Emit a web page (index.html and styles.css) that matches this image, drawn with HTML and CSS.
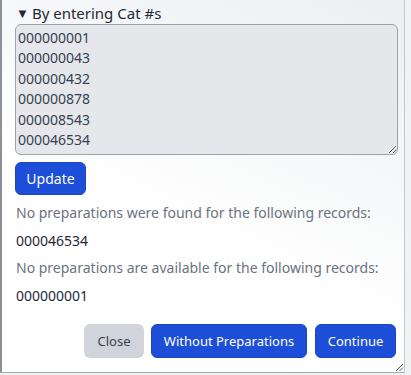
FILE: index.html
```html
<!DOCTYPE html>
<html>
<head>
<meta charset="utf-8">
<link rel="stylesheet" href="styles.css">
</head>
<body>
<div class="dialog">
  <details open class="entry">
    <summary class="summary">By entering Cat #s</summary>
    <textarea class="cats" rows="6">000000001
000000043
000000432
000000878
000008543
000046534</textarea>
  </details>
  <button class="btn btn-primary update">Update</button>
  <p class="note">No preparations were found for the following records:</p>
  <p class="rec">000046534</p>
  <p class="note">No preparations are available for the following records:</p>
  <p class="rec">000000001</p>
  <div class="actions">
    <button class="btn btn-gray">Close</button>
    <button class="btn btn-primary">Without Preparations</button>
    <button class="btn btn-primary">Continue</button>
  </div>
  <svg class="grip" width="10" height="10" viewBox="0 0 10 10"><path d="M9 2 L2 9 M9 5.5 L5.5 9" stroke="#555" stroke-width="1" fill="none"/></svg>
</div>
</body>
</html>
```

FILE: styles.css
```css
html, body {
  margin: 0;
  padding: 0;
}
body {
  width: 411px;
  height: 375px;
  overflow: hidden;
  background: #f1f2f4;
  font-family: "Noto Sans", "Open Sans", sans-serif;
  font-size: 14px;
  color: #1f2937;
}
.dialog {
  position: relative;
  box-sizing: border-box;
  width: 405px;
  height: 373px;
  border-left: 2px solid #8d9096;
  border-right: 1px solid #c4c7cc;
  border-bottom: 1px solid #a5a9b0;
  background: linear-gradient(205deg, #eceef1 0%, #f7f8f9 35%, #ffffff 60%, #ffffff 100%);
  padding: 3px 7px 0 13px;
}
.entry {
  margin: 0;
}
.summary {
  list-style: none;
  cursor: pointer;
  line-height: 20px;
  font-size: 15px;
  color: #1f2937;
  padding-left: 1px;
}
.summary::-webkit-details-marker { display: none; }
.summary::before {
  content: "\25BC";
  font-size: 13px;
  margin-right: 3px;
  position: relative;
  top: -1px;
}
.cats {
  display: block;
  box-sizing: border-box;
  width: 383px;
  height: 131px;
  margin: 0;
  padding: 3px 2px;
  border: 1px solid #9ea3ab;
  border-radius: 6px;
  background: #e5e7eb;
  font-family: "Noto Sans", "Open Sans", sans-serif;
  font-size: 14px;
  line-height: 20.4px;
  color: #374151;
  resize: both;
  overflow: hidden;
}
.btn {
  box-sizing: border-box;
  border: none;
  border-radius: 6px;
  font-family: "Noto Sans", "Open Sans", sans-serif;
  font-size: 13px;
  height: 34px;
  padding: 0 12px;
  cursor: pointer;
}
.btn-primary {
  background: #1d4ed8;
  color: #ffffff;
  border: 1px solid #1a46c4;
}
.btn-gray {
  background: #d1d5db;
  color: #374151;
}
.update {
  display: block;
  margin-top: 7px;
  height: 33px;
  width: 71px;
  padding: 0;
  font-size: 14px;
}
.note {
  margin: 8px 0 0 1px;
  line-height: 20px;
  color: #6b7280;
  font-size: 14px;
}
.rec {
  margin: 8px 0 0 1px;
  line-height: 19px;
  color: #1f2937;
  font-size: 14px;
}
.actions {
  display: flex;
  justify-content: flex-end;
  gap: 7px;
  margin-top: 19px;
  margin-right: 1px;
}
.actions .btn-gray { width: 60px; padding: 0; }
.actions .btn-primary:nth-child(2) { width: 156px; padding: 0; }
.actions .btn-primary:nth-child(3) { width: 81px; padding: 0; margin-left: 1px; }
.grip {
  position: absolute;
  right: 0;
  bottom: 0;
}
```
